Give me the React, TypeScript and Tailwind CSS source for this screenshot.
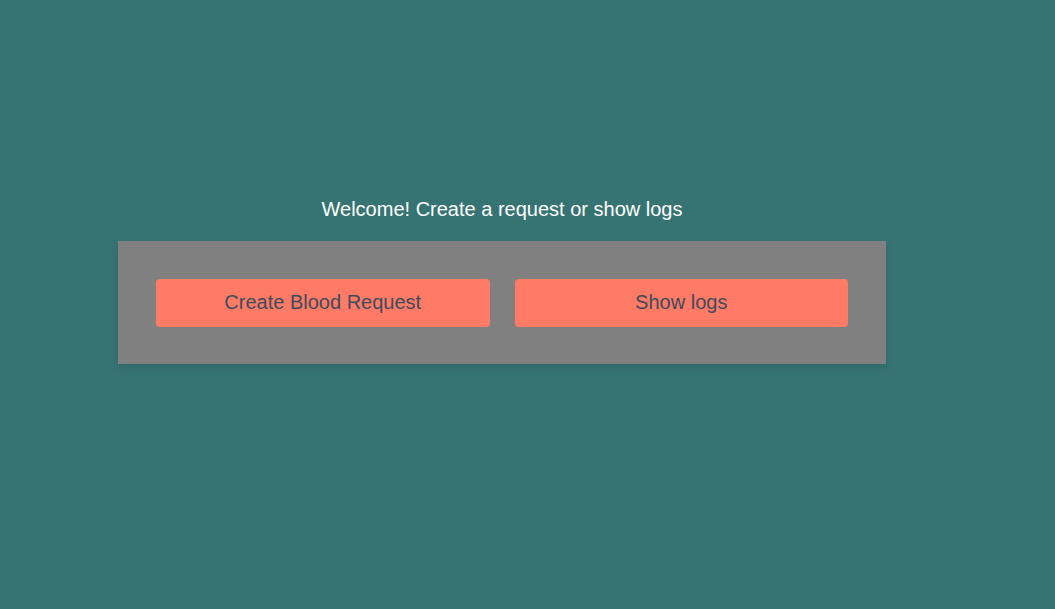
export default function App() {
    return (
        <div className="min-h-[609px] w-full bg-[#367473] pt-[195px] font-['Liberation_Sans',Arial,sans-serif]">
            <div className="ml-[118px] w-[768px]">
                <p className="mb-[18px] text-center text-xl leading-7 text-white">
                    Welcome! Create a request or show logs
                </p>
                <div className="flex gap-[25px] bg-[#808080] px-[38px] pt-[38px] pb-[37px] shadow-[0_4px_8px_rgba(0,0,0,0.1)]">
                    <button
                        type="button"
                        className="h-12 flex-1 rounded bg-[#ff7b66] pb-[2px] text-xl text-[#3f4a5c]"
                    >
                        Create Blood Request
                    </button>
                    <button
                        type="button"
                        className="h-12 flex-1 rounded bg-[#ff7b66] pb-[2px] text-xl text-[#3f4a5c]"
                    >
                        Show logs
                    </button>
                </div>
            </div>
        </div>
    )
}
